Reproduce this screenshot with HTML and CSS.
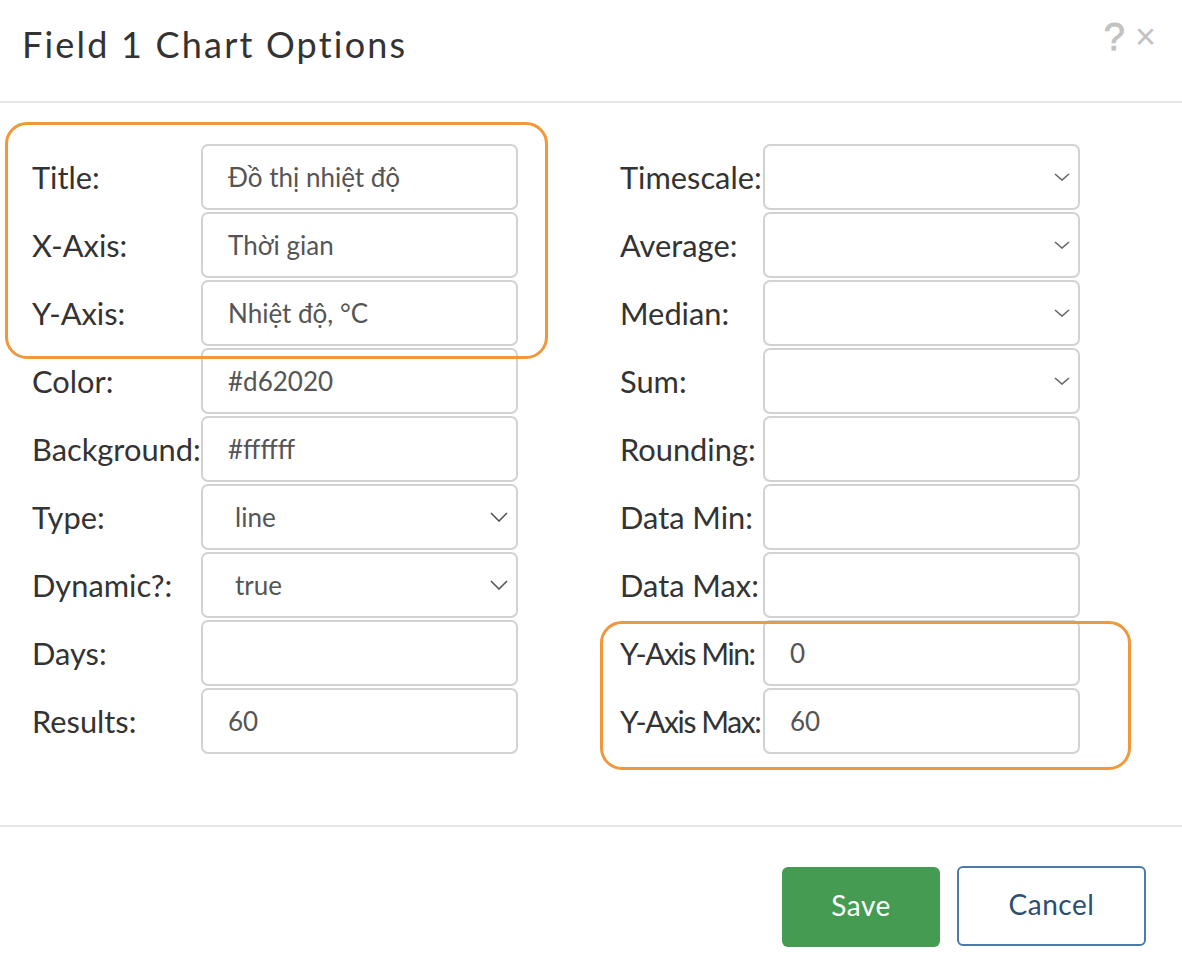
FILE: index.html
```html
<!DOCTYPE html>
<html>
<head>
<meta charset="utf-8">
<link rel="stylesheet" href="styles.css">
</head>
<body>
<div class="modal">
  <div class="header">
    <h1 class="title">Field 1 Chart Options</h1>
    <div class="tools"><span class="help">?</span><span class="close">×</span></div>
  </div>
  <div class="body">
    <div class="col col-left">
      <div class="row"><label>Title:</label><input class="field" value="Đồ thị nhiệt độ"></div>
      <div class="row"><label>X-Axis:</label><input class="field" value="Thời gian"></div>
      <div class="row"><label>Y-Axis:</label><input class="field" value="Nhiệt độ, °C"></div>
      <div class="row"><label>Color:</label><input class="field" value="#d62020"></div>
      <div class="row"><label>Background:</label><input class="field" value="#ffffff"></div>
      <div class="row"><label>Type:</label><div class="field select"><span>line</span><svg class="chev chev-lg" viewBox="0 0 18 10"><path d="M1 1 L9 9 L17 1"/></svg></div></div>
      <div class="row"><label>Dynamic?:</label><div class="field select"><span>true</span><svg class="chev chev-lg" viewBox="0 0 18 10"><path d="M1 1 L9 9 L17 1"/></svg></div></div>
      <div class="row"><label>Days:</label><input class="field" value=""></div>
      <div class="row"><label>Results:</label><input class="field" value="60"></div>
    </div>
    <div class="col col-right">
      <div class="row"><label>Timescale:</label><div class="field select"><span></span><svg class="chev chev-sm" viewBox="0 0 16 8"><path d="M1 1 L8 7 L15 1"/></svg></div></div>
      <div class="row"><label>Average:</label><div class="field select"><span></span><svg class="chev chev-sm" viewBox="0 0 16 8"><path d="M1 1 L8 7 L15 1"/></svg></div></div>
      <div class="row"><label>Median:</label><div class="field select"><span></span><svg class="chev chev-sm" viewBox="0 0 16 8"><path d="M1 1 L8 7 L15 1"/></svg></div></div>
      <div class="row"><label>Sum:</label><div class="field select"><span></span><svg class="chev chev-sm" viewBox="0 0 16 8"><path d="M1 1 L8 7 L15 1"/></svg></div></div>
      <div class="row"><label>Rounding:</label><input class="field" value=""></div>
      <div class="row"><label>Data Min:</label><input class="field" value=""></div>
      <div class="row"><label>Data Max:</label><input class="field" value=""></div>
      <div class="row"><label class="tight">Y-Axis Min:</label><input class="field" value="0"></div>
      <div class="row"><label class="tight">Y-Axis Max:</label><input class="field" value="60"></div>
    </div>
    <div class="highlight hl-left"></div>
    <div class="highlight hl-right"></div>
  </div>
  <div class="footer">
    <button class="btn btn-save">Save</button>
    <button class="btn btn-cancel">Cancel</button>
  </div>
</div>
</body>
</html>
```

FILE: styles.css
```css
* { box-sizing: border-box; }
html, body { margin: 0; padding: 0; background: #fff; }
body { width: 1182px; height: 974px; overflow: hidden; }

.modal { width: 1182px; font-family: "Lato", "Open Sans", sans-serif; }

.header {
  height: 103px;
  border-bottom: 2px solid #e5e5e5;
  display: flex;
  justify-content: space-between;
  align-items: flex-start;
  padding: 0 26px 0 22px;
}
.title {
  margin: 20px 0 0 0;
  font-family: "Lato", sans-serif;
  font-weight: 400;
  font-size: 36px;
  letter-spacing: 2.2px;
  color: #333;
  line-height: 48px;
}
.tools { display: flex; gap: 10px; margin-top: 14px; color: #c2c2c2; font-family: "Liberation Sans", sans-serif; }
.help { font-size: 38px; line-height: 46px; -webkit-text-stroke: 0.8px #c2c2c2; }
.close { font-size: 36px; line-height: 46px; }

.body {
  position: relative;
  display: flex;
  padding: 41px 0 71px 32px;
  gap: 102px;
}
.col { display: flex; flex-direction: column; gap: 2px; }
.row { display: grid; height: 66px; align-items: center; }
.col-left .row { grid-template-columns: 169px 317px; }
.col-right .row { grid-template-columns: 143px 317px; }

label {
  font-family: "Lato", sans-serif;
  font-size: 30.8px;
  color: #333;
  white-space: nowrap;
}
label.tight { font-size: 30px; letter-spacing: -1.4px; }

.field {
  height: 66px;
  width: 317px;
  border: 2px solid #d2d2d2;
  border-radius: 7px;
  background: #fff;
  font-family: "Lato", sans-serif;
  font-size: 26px;
  color: #555;
  padding: 0 0 0 25px;
  outline: none;
  margin: 0;
}
.select {
  display: flex;
  align-items: center;
  justify-content: space-between;
  padding: 0 8px 0 32px;
}
.chev { fill: none; stroke: #555; stroke-width: 1.6; }
.chev-lg { width: 18px; height: 10px; }
.chev-sm { width: 16px; height: 8px; margin-right: 0; stroke: #666; }

.highlight {
  position: absolute;
  border: 3px solid #f0983a;
  border-radius: 22px;
  pointer-events: none;
}
.hl-left { left: 5px; top: 19px; width: 543px; height: 237px; }
.hl-right { left: 600px; top: 518px; width: 531px; height: 149px; }

.footer {
  border-top: 2px solid #e5e5e5;
  display: flex;
  justify-content: flex-end;
  gap: 17px;
  padding: 39px 36px 0 0;
}
.btn {
  height: 80px;
  font-family: "Lato", sans-serif;
  font-size: 28px;
  letter-spacing: 0.5px;
  border-radius: 6px;
  padding: 0 0 4px 0;
  cursor: pointer;
}
.btn-save { width: 158px; background: #459b51; color: #fff; border: none; margin-top: 1px; }
.btn-cancel { width: 189px; background: #fff; color: #2c4e70; border: 2px solid #4a7bab; }
```
